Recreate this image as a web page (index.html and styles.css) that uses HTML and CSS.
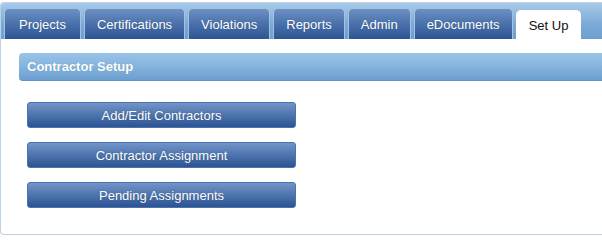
FILE: index.html
```html
<!DOCTYPE html>
<html>
<head>
<meta charset="utf-8">
<link rel="stylesheet" href="styles.css">
</head>
<body>
<div class="frame">
  <div class="tabbar">
    <div class="tab">Projects</div>
    <div class="tab">Certifications</div>
    <div class="tab">Violations</div>
    <div class="tab">Reports</div>
    <div class="tab">Admin</div>
    <div class="tab">eDocuments</div>
    <div class="tab active">Set Up</div>
  </div>
  <div class="content">
    <div class="header">Contractor Setup</div>
    <div class="buttons">
      <div class="btn">Add/Edit Contractors</div>
      <div class="btn">Contractor Assignment</div>
      <div class="btn">Pending Assignments</div>
    </div>
  </div>
</div>
</body>
</html>
```
FILE: styles.css
```css
html, body {
  margin: 0;
  padding: 0;
  background: #ffffff;
  overflow: hidden;
}
body {
  padding-top: 2px;
  font-family: "Liberation Sans", Arial, sans-serif;
  font-size: 13px;
}
.frame {
  border: 1px solid #bcd2e6;
  border-right: none;
  border-radius: 4px 0 0 4px;
  height: 231px;
  box-sizing: content-box;
  overflow: hidden;
}
.tabbar {
  display: flex;
  align-items: flex-end;
  gap: 3px;
  height: 36px;
  padding-left: 3px;
  box-sizing: border-box;
  background: linear-gradient(#a9cae8, #7aa9d6 60%, #6c9fd1);
}
.tab {
  height: 31px;
  padding: 0 12px;
  display: flex;
  align-items: center;
  justify-content: center;
  color: #ffffff;
  border: 1px solid #a3c2e2;
  border-bottom: none;
  border-radius: 5px 5px 0 0;
  box-sizing: border-box;
  background: linear-gradient(#6b90c4, #4a71aa 50%, #2d5594);
  text-shadow: 0 0 1px rgba(0, 0, 0, 0.25);
}
.tab:first-child {
  padding: 0 14px;
}
.tab.active {
  background: #ffffff;
  color: #111111;
  border-color: #ffffff;
  height: 29px;
  text-shadow: none;
}
.content {
  padding-top: 14px;
}
.header {
  margin-left: 18px;
  height: 28px;
  display: flex;
  align-items: center;
  padding-left: 8px;
  color: #ffffff;
  font-weight: bold;
  border-radius: 4px 0 0 4px;
  border-bottom: 1px solid #5d93c6;
  box-sizing: border-box;
  background: linear-gradient(#9ac3e8, #84b4de 50%, #6c9fd0);
  text-shadow: 0 0 1px rgba(0, 0, 0, 0.2);
}
.buttons {
  display: flex;
  flex-direction: column;
  gap: 14px;
  margin-top: 21px;
  margin-left: 26px;
}
.btn {
  width: 269px;
  height: 26px;
  box-sizing: border-box;
  display: flex;
  align-items: center;
  justify-content: center;
  color: #ffffff;
  border-radius: 3px;
  border: 1px solid #4b72ab;
  background: linear-gradient(#7195c9, #4d74ad 50%, #2c5392);
  text-shadow: 0 0 1px rgba(0, 0, 0, 0.25);
}
```
